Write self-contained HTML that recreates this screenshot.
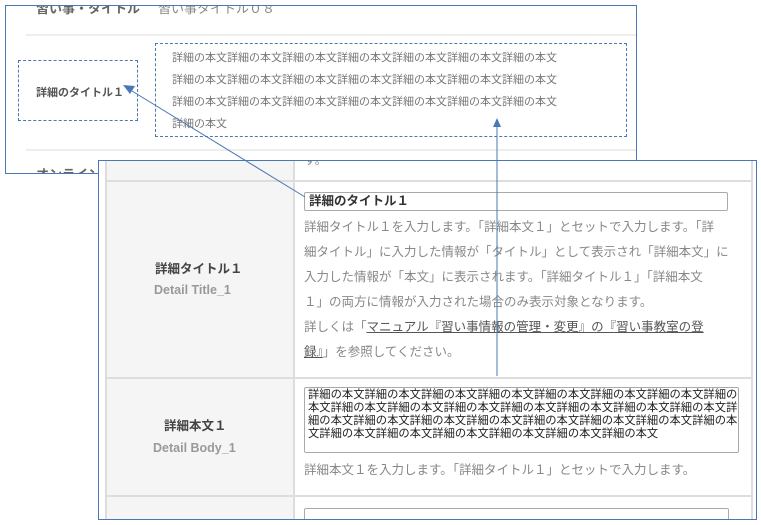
<!DOCTYPE html>
<html><head><meta charset="utf-8"><style>
*{margin:0;padding:0;box-sizing:border-box}
body{width:761px;height:525px;background:#fff;position:relative;overflow:hidden;font-family:"Liberation Sans","Noto Sans CJK JP",sans-serif}
.a{position:absolute;white-space:nowrap}
#top{position:absolute;left:5px;top:5px;width:632px;height:169px;border:1px solid #4a78b5;background:#fff;overflow:hidden}
#bot{position:absolute;left:98px;top:160px;width:659px;height:360px;border:1px solid #4a78b5;background:#fff;overflow:hidden}
.g{color:#777;font-size:11px}
.h{color:#888;font-size:12.5px;line-height:25px}
</style></head><body>
<div id="top">
 <div class="a" style="left:30px;top:-8px;font-size:13px;font-weight:bold;color:#666">習い事・タイトル</div>
 <div class="a" style="left:152px;top:-8px;font-size:13px;color:#888">習い事タイトル０８</div>
 <div class="a" style="left:20px;top:28px;width:612px;height:2px;background:#eee"></div>
 <div class="a" style="left:12px;top:54px;width:120px;height:61px;border:1px dashed #4a78b5"></div>
 <div class="a" style="left:30px;top:78px;font-size:11px;font-weight:bold;color:#555">詳細のタイトル１</div>
 <div class="a" style="left:149px;top:37px;width:472px;height:94px;border:1px dashed #4a78b5"></div>
 <div class="a g" style="left:166px;top:41px;line-height:22px">詳細の本文詳細の本文詳細の本文詳細の本文詳細の本文詳細の本文詳細の本文<br>詳細の本文詳細の本文詳細の本文詳細の本文詳細の本文詳細の本文詳細の本文<br>詳細の本文詳細の本文詳細の本文詳細の本文詳細の本文詳細の本文詳細の本文<br>詳細の本文</div>
 <div class="a" style="left:20px;top:143px;width:612px;height:2px;background:#eee"></div>
 <div class="a" style="left:30px;top:158px;font-size:13px;font-weight:bold;color:#666">オンライン予</div>
</div>
<div id="bot">
 <div class="a" style="left:6px;top:0;width:189px;height:360px;background:#f5f5f5"></div>
 <div class="a" style="left:6px;top:-2px;width:2px;height:360px;background:#ddd"></div>
 <div class="a" style="left:194px;top:0;width:2px;height:360px;background:#ddd"></div>
 <div class="a" style="left:652px;top:0;width:2px;height:360px;background:#ddd"></div>
 <div class="a" style="left:6px;top:19px;width:648px;height:2px;background:#ddd"></div>
 <div class="a" style="left:6px;top:216px;width:648px;height:2px;background:#ddd"></div>
 <div class="a" style="left:6px;top:334px;width:648px;height:2px;background:#ddd"></div>
 <div class="a" style="left:205px;top:-10px;font-size:12px;color:#888">す。</div>
 <div class="a" style="left:56px;top:97px;font-size:12.5px;font-weight:bold;color:#444">詳細タイトル１</div>
 <div class="a" style="left:55px;top:122px;font-size:12.5px;font-weight:bold;color:#999">Detail Title_1</div>
 <div class="a" style="left:205px;top:31px;width:424px;height:19px;border:1px solid #aaa;border-radius:2px;font-size:12.5px;font-weight:bold;color:#333;padding:1px 4px;line-height:15px">詳細のタイトル１</div>
 <div class="a h" style="left:205px;top:54px">詳細タイトル１を入力します。「詳細本文１」とセットで入力します。「詳<br>細タイトル」に入力した情報が「タイトル」として表示され「詳細本文」に<br>入力した情報が「本文」に表示されます。「詳細タイトル１」「詳細本文<br>１」の両方に情報が入力された場合のみ表示対象となります。<br>詳しくは「<span style="text-decoration:underline;color:#555">マニュアル『習い事情報の管理・変更』の『習い事教室の登</span><br><span style="text-decoration:underline;color:#555">録』</span>」を参照してください。</div>
 <div class="a" style="left:65px;top:254px;font-size:12.5px;font-weight:bold;color:#444">詳細本文１</div>
 <div class="a" style="left:54px;top:280px;font-size:12.5px;font-weight:bold;color:#999">Detail Body_1</div>
 <div class="a" style="left:205px;top:226px;width:435px;height:66px;border:1px solid #aaa;border-radius:2px;font-size:11.3px;color:#222;padding:1px 3px;line-height:13px;overflow:hidden">詳細の本文詳細の本文詳細の本文詳細の本文詳細の本文詳細の本文詳細の本文詳細の<br>本文詳細の本文詳細の本文詳細の本文詳細の本文詳細の本文詳細の本文詳細の本文詳<br>細の本文詳細の本文詳細の本文詳細の本文詳細の本文詳細の本文詳細の本文詳細の本<br>文詳細の本文詳細の本文詳細の本文詳細の本文詳細の本文詳細の本文</div>
 <div class="a h" style="left:205px;top:297px">詳細本文１を入力します。「詳細タイトル１」とセットで入力します。</div>
 <div class="a" style="left:205px;top:347px;width:425px;height:20px;border:1px solid #aaa;border-radius:2px"></div>
</div>
<svg class="a" style="left:0;top:0" width="761" height="525">
 <line x1="305" y1="197" x2="132" y2="91" stroke="#4a78b5" stroke-width="1"/>
 <polygon points="123,85 135,86 130,94" fill="#4a78b5"/>
 <line x1="497" y1="376" x2="497" y2="126" stroke="#4a78b5" stroke-width="1"/>
 <polygon points="497,118 493,127 501,127" fill="#4a78b5"/>
</svg>
</body></html>
